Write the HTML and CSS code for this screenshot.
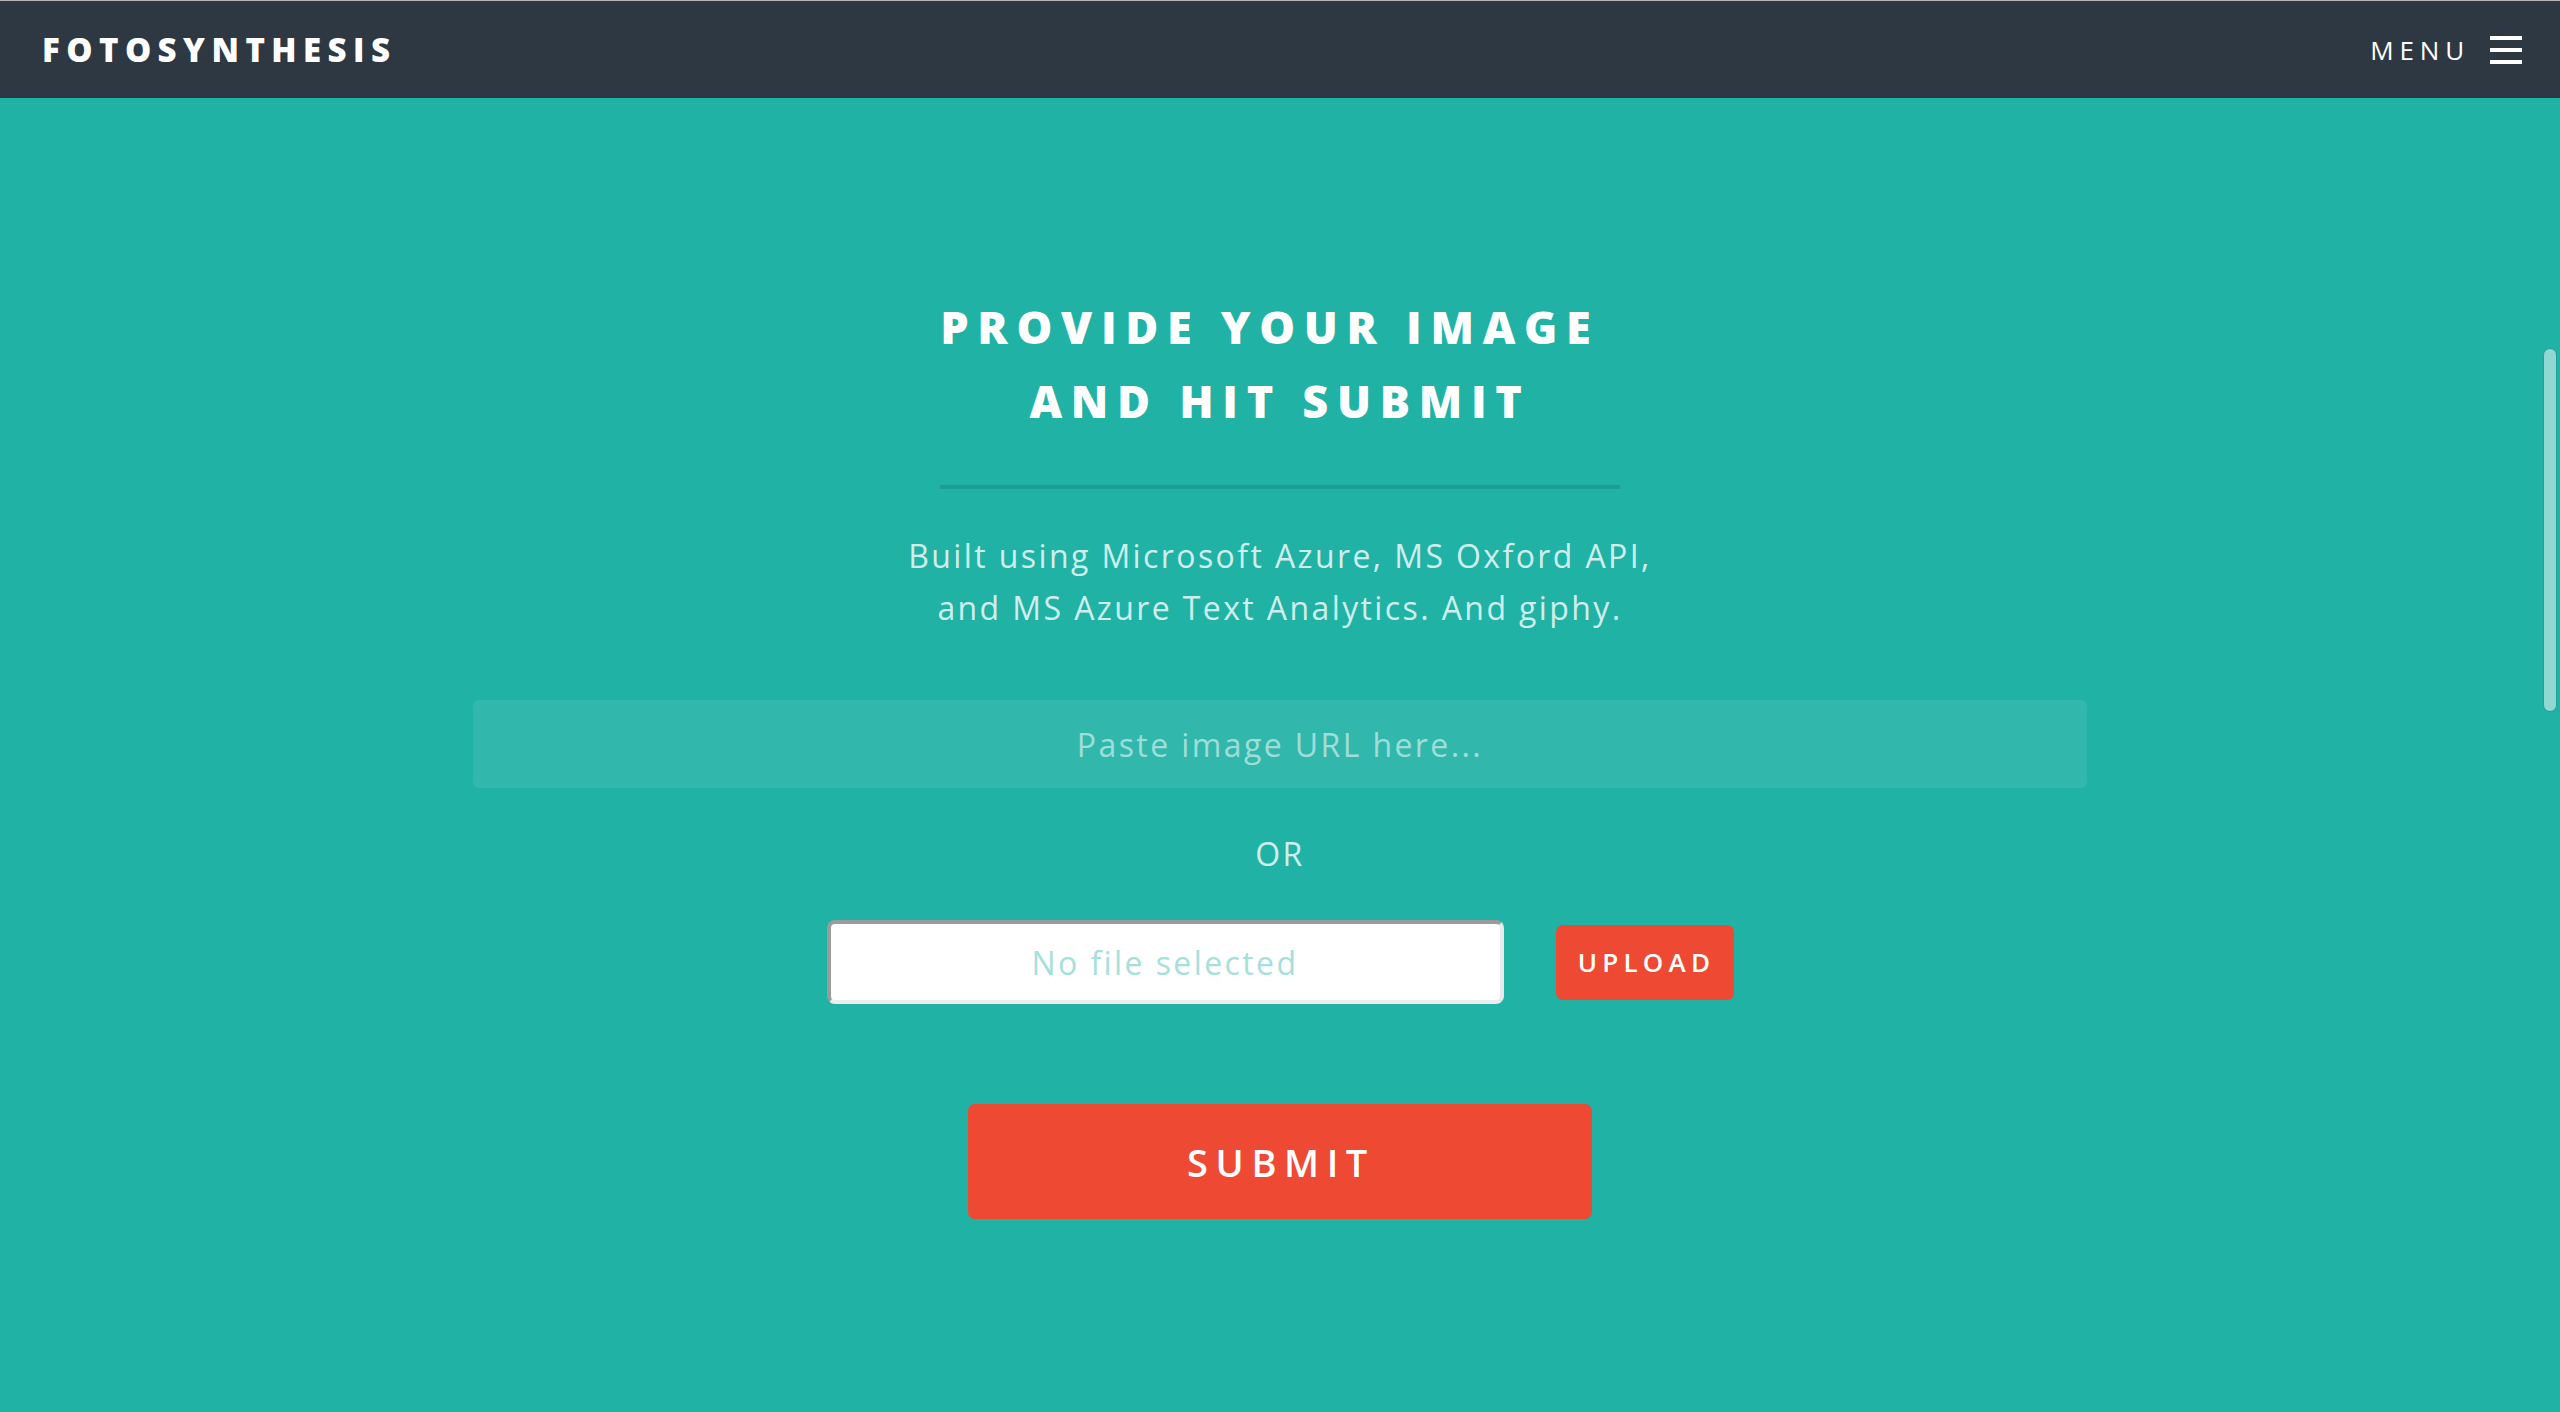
FILE: index.html
```html
<!DOCTYPE html>
<html lang="en">
<head>
    <meta charset="UTF-8">
    <meta name="viewport" content="width=device-width, initial-scale=1.0">
    <title>Fotosynthesis</title>
    <link rel="stylesheet" href="styles.css">
</head>
<body>
    <header class="topbar">
        <h1 class="logo">Fotosynthesis</h1>
        <a class="menu-toggle" href="#menu">
            <span>Menu</span>
            <span class="burger"><i></i><i></i><i></i></span>
        </a>
    </header>

    <main class="banner">
        <h2 class="title">Provide your image&nbsp;<br>and hit submit</h2>
        <p class="lead">Built using Microsoft Azure, MS Oxford API,<br>and MS Azure Text Analytics. And giphy.</p>

        <form class="upload-form" onsubmit="return false;">
            <input type="text" class="url-input" placeholder="Paste image URL here...">
            <p class="or">OR</p>
            <div class="file-row">
                <input type="text" class="file-name" placeholder="No file selected" readonly>
                <button type="button" class="btn btn-upload">Upload</button>
            </div>
            <button type="submit" class="btn btn-submit">Submit</button>
        </form>
    </main>

    <div class="scroll-thumb"></div>
</body>
</html>
```

FILE: styles.css
```css
html, body {
    height: 100%;
}
body {
    margin: 0;
    background: #21b2a6;
    font-family: "Open Sans", "Noto Sans", sans-serif;
    color: #fff;
    overflow: hidden;
}

/* top bar */
.topbar {
    display: flex;
    align-items: center;
    justify-content: space-between;
    height: 97px;
    padding: 0 38px 0 42px;
    background: #2e3842;
    border-top: 1px solid #b8b8b8;
}
.logo {
    margin: 0;
    font-size: 33px;
    font-weight: 800;
    letter-spacing: 0.195em;
    text-transform: uppercase;
}
.menu-toggle {
    display: flex;
    align-items: center;
    gap: 20px;
    color: #fff;
    text-decoration: none;
    font-size: 26px;
    font-weight: 400;
    letter-spacing: 0.225em;
    text-transform: uppercase;
}
.burger {
    display: flex;
    flex-direction: column;
    gap: 8px;
    width: 32px;
}
.burger i {
    display: block;
    height: 4px;
    background: #fff;
}

/* banner */
.banner {
    display: flex;
    flex-direction: column;
    align-items: center;
    padding-top: 192px;
    text-align: center;
}
.title {
    margin: 0;
    font-size: 45px;
    font-weight: 800;
    line-height: 74px;
    letter-spacing: 0.193em;
    text-transform: uppercase;
}
.title::after {
    content: '';
    display: block;
    width: 680px;
    height: 4px;
    margin: 47px auto 0;
    background: #1d9d92;
}
.lead {
    margin: 41px 0 0;
    font-size: 32px;
    line-height: 52px;
    letter-spacing: 0.075em;
    color: rgba(255,255,255,0.8);
}

.upload-form {
    display: flex;
    flex-direction: column;
    align-items: center;
    margin-top: 66px;
}
.url-input {
    width: 1614px;
    height: 88px;
    box-sizing: border-box;
    border: none;
    border-radius: 6px;
    background: rgba(255,255,255,0.075);
    color: #fff;
    font-family: inherit;
    font-size: 32px;
    letter-spacing: 0.075em;
    text-align: center;
    outline: none;
}
.url-input::placeholder {
    color: rgba(255,255,255,0.55);
}
.or {
    margin: 40px 0 0;
    font-size: 32px;
    line-height: 51px;
    letter-spacing: 0.075em;
    color: rgba(255,255,255,0.8);
}
.file-row {
    display: flex;
    align-items: center;
    gap: 52px;
    margin-top: 41px;
}
.file-name {
    width: 677px;
    height: 84px;
    box-sizing: border-box;
    border: 4px solid;
    border-color: #9b9b9b #e9e9e9 #ececec #9b9b9b;
    border-radius: 8px;
    background: #fff;
    font-family: inherit;
    font-size: 32px;
    letter-spacing: 0.075em;
    text-align: center;
    outline: none;
}
.file-name::placeholder {
    color: #a6e0db;
}
.btn {
    border: none;
    border-radius: 7px;
    background: #ed4933;
    color: #fff;
    font-family: inherit;
    font-weight: 600;
    letter-spacing: 0.2em;
    text-transform: uppercase;
    cursor: pointer;
    padding: 0;
}
.btn-upload {
    width: 178px;
    height: 75px;
    font-size: 26px;
    padding-left: 4px;
}
.btn-submit {
    width: 624px;
    height: 115px;
    margin-top: 100px;
    font-size: 38px;
    padding-left: 2px;
}

/* overlay scrollbar thumb */
.scroll-thumb {
    position: absolute;
    top: 348px;
    right: 3px;
    width: 14px;
    height: 364px;
    box-sizing: border-box;
    border-radius: 7px;
    background: #90d8d1;
    border: 1px solid #1fa297;
}
```
